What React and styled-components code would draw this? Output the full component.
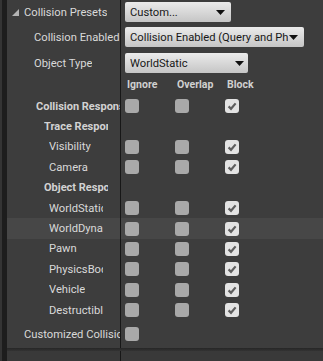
import React from 'react';
import styled, { createGlobalStyle } from 'styled-components';

const Global = createGlobalStyle`
  html, body { margin: 0; padding: 0; background: #3d3d3d; overflow: hidden; }
  body { font-family: Roboto, "Noto Sans", "Liberation Sans", sans-serif; }
`;

const Root = styled.div`
  display: flex;
  width: 323px;
  height: 361px;
  overflow: hidden;
`;

const Edge = styled.div`
  width: 7px;
  flex: none;
  background: linear-gradient(to right, #343434 0 2px, #1d1d1d 2px 7px);
`;

const Panel = styled.div`
  flex: 1;
  min-width: 0;
  display: flex;
  flex-direction: column;
  background: #3d3d3d;
`;

const Row = styled.div`
  display: grid;
  grid-template-columns: 114px 1fr;
  height: ${p => p.$h}px;
  flex: none;
  background: ${p => (p.$hl ? '#474747' : 'transparent')};
`;

const LabelCell = styled.div`
  border-right: 1px solid #171717;
  display: flex;
  align-items: center;
  overflow: hidden;
  padding-left: ${p => p.$indent}px;
`;

const LabelText = styled.span`
  color: ${p => (p.$bold ? '#d2d2d2' : '#d9d9d9')};
  font-size: ${p => (p.$bold ? 11 : 11.2)}px;
  font-weight: ${p => (p.$bold ? 700 : 400)};
  white-space: nowrap;
  overflow: hidden;
  ${p => (p.$max ? `max-width: ${p.$max}px;` : '')}
  flex: none;
`;

const Arrow = styled.svg`
  flex: none;
  margin-right: 5px;
`;

const ValueCell = styled.div`
  display: flex;
  align-items: ${p => p.$align || 'center'};
  padding-left: ${p => p.$pad ?? 4}px;
  padding-top: ${p => p.$pt || 0}px;
  min-width: 0;
`;

const Dropdown = styled.div`
  width: ${p => p.$w}px;
  height: 20px;
  box-sizing: border-box;
  border-radius: 2px;
  background: linear-gradient(#ebebeb, #c5c5c5);
  display: flex;
  align-items: center;
  padding: 0 ${p => p.$pr}px 0 5px;
  gap: 1px;
`;

const DropText = styled.span`
  flex: 1;
  min-width: 0;
  overflow: hidden;
  white-space: nowrap;
  color: #181818;
  font-size: 11.2px;
`;

const Headers = styled.div`
  display: grid;
  grid-template-columns: 50px 50px 50px;
  padding-left: 3px;
  align-items: center;
`;

const HeaderText = styled.span`
  color: #d0d0d0;
  font-size: 10.5px;
  font-weight: 700;
  white-space: nowrap;
`;

const Checks = styled.div`
  display: grid;
  grid-template-columns: 50px 50px 50px;
  align-items: center;
`;

const Box = styled.div`
  width: 14px;
  height: 14px;
  border-radius: 3px;
  background: ${p => (p.$on ? '#e3e3e3' : '#a9a9a9')};
  display: flex;
  align-items: center;
  justify-content: center;
`;

const Shadow = styled.div`
  height: 3px;
  flex: none;
  background: linear-gradient(#262626, #333333);
`;

const BottomRow = styled.div`
  flex: 1;
  display: grid;
  grid-template-columns: 114px 1fr;
  background: #393939;
`;

const BottomLabel = styled.div`
  border-right: 1px solid #171717;
`;

const Triangle = () => (
  <Arrow width="7" height="7" viewBox="0 0 7 7">
    <polygon points="7,0 7,7 0,7" fill="#b4b4b4" />
  </Arrow>
);

const DownArrow = () => (
  <svg width="9" height="5" viewBox="0 0 9 5" style={{ flex: 'none' }}>
    <polygon points="0,0 9,0 4.5,5" fill="#111" />
  </svg>
);

const Check = () => (
  <svg width="12" height="12" viewBox="0 0 12 12">
    <path d="M2.6 6.4 L5 8.8 L9.6 3.4" fill="none" stroke="#5e5e5e" strokeWidth="2.2" />
  </svg>
);

const CheckBox = ({ on }) => <Box $on={on}>{on && <Check />}</Box>;

const responses = [
  { label: 'Collision Responses', indent: 29, bold: true, checks: true },
  { label: 'Trace Responses', indent: 37, bold: true, max: 64 },
  { label: 'Visibility', indent: 42, max: 54, checks: true },
  { label: 'Camera', indent: 42, max: 54, checks: true },
  { label: 'Object Responses', indent: 37, bold: true, max: 64 },
  { label: 'WorldStatic', indent: 42, max: 54, checks: true },
  { label: 'WorldDynamic', indent: 42, max: 54, checks: true, hl: true },
  { label: 'Pawn', indent: 42, max: 54, checks: true },
  { label: 'PhysicsBody', indent: 42, max: 54, checks: true },
  { label: 'Vehicle', indent: 42, max: 54, checks: true },
  { label: 'Destructible', indent: 42, max: 54, checks: true },
];

export default function App() {
  return (
    <>
      <Global />
      <Root>
        <Edge />
        <Panel>
          <Row $h={24}>
            <LabelCell $indent={5}>
              <Triangle />
              <LabelText>Collision Presets</LabelText>
            </LabelCell>
            <ValueCell>
              <Dropdown $w={106} $pr={6}>
                <DropText>Custom...</DropText>
                <DownArrow />
              </Dropdown>
            </ValueCell>
          </Row>
          <Row $h={26}>
            <LabelCell $indent={27}>
              <LabelText>Collision Enabled</LabelText>
            </LabelCell>
            <ValueCell>
              <Dropdown $w={179} $pr={6}>
                <DropText>Collision Enabled (Query and Physics)</DropText>
                <DownArrow />
              </Dropdown>
            </ValueCell>
          </Row>
          <Row $h={26}>
            <LabelCell $indent={27}>
              <LabelText>Object Type</LabelText>
            </LabelCell>
            <ValueCell>
              <Dropdown $w={123} $pr={4}>
                <DropText>WorldStatic</DropText>
                <DownArrow />
              </Dropdown>
            </ValueCell>
          </Row>
          <Row $h={20}>
            <LabelCell $indent={0} />
            <ValueCell $pad={3} $align="flex-start" $pt={2}>
              <Headers>
                <HeaderText>Ignore</HeaderText>
                <HeaderText>Overlap</HeaderText>
                <HeaderText>Block</HeaderText>
              </Headers>
            </ValueCell>
          </Row>
          {responses.map(r => (
            <Row key={r.label} $h={20.4} $hl={r.hl}>
              <LabelCell $indent={r.indent}>
                <LabelText $bold={r.bold} $max={r.max}>{r.label}</LabelText>
              </LabelCell>
              <ValueCell>
                {r.checks && (
                  <Checks>
                    <CheckBox on={false} />
                    <CheckBox on={false} />
                    <CheckBox on={true} />
                  </Checks>
                )}
              </ValueCell>
            </Row>
          ))}
          <Row $h={28}>
            <LabelCell $indent={17}>
              <LabelText>Customized Collision</LabelText>
            </LabelCell>
            <ValueCell $align="flex-start" $pt={7}>
              <CheckBox on={false} />
            </ValueCell>
          </Row>
          <Shadow />
          <BottomRow>
            <BottomLabel />
            <div />
          </BottomRow>
        </Panel>
      </Root>
    </>
  );
}
